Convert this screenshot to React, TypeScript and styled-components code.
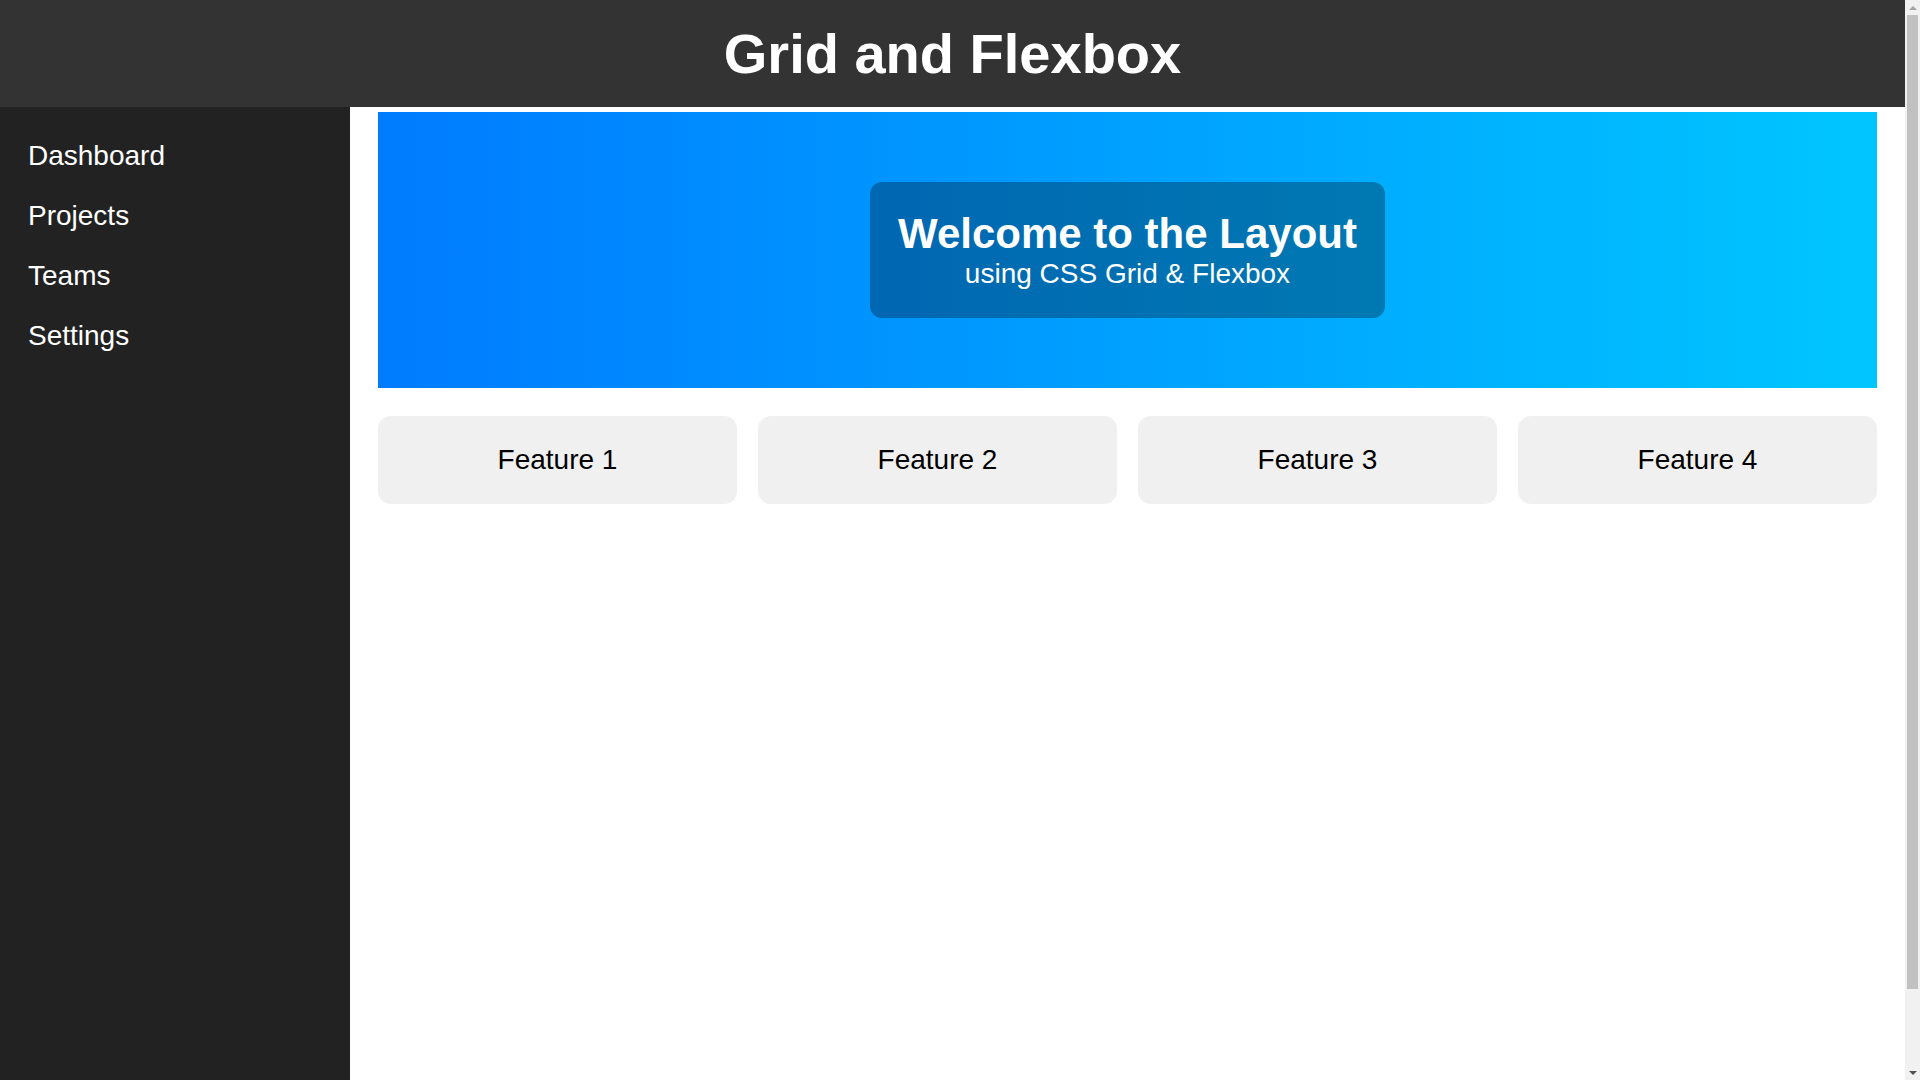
import { FC } from 'react';
import { styled, createGlobalStyle } from 'styled-components';

const GlobalStyle = createGlobalStyle`
  * {
    box-sizing: border-box;
  }
  body {
    margin: 0;
    padding-right: 15px;
    font-family: 'Liberation Sans', Arial, sans-serif;
    background: #fff;
  }
`;

const navItems = ['Dashboard', 'Projects', 'Teams', 'Settings'];
const features = ['Feature 1', 'Feature 2', 'Feature 3', 'Feature 4'];

const App: FC = () => {
  return (
    <>
      <GlobalStyle />
      <Layout>
        <Header>
          <Title>Grid and Flexbox</Title>
        </Header>
        <Sidebar>
          <NavList>
            {navItems.map((item) => (
              <NavItem key={item}>{item}</NavItem>
            ))}
          </NavList>
        </Sidebar>
        <Main>
          <Hero>
            <Banner>
              <BannerTitle>Welcome to the Layout</BannerTitle>
              <BannerText>using CSS Grid &amp; Flexbox</BannerText>
            </Banner>
          </Hero>
          <FeatureGrid>
            {features.map((f) => (
              <FeatureCard key={f}>{f}</FeatureCard>
            ))}
          </FeatureGrid>
        </Main>
      </Layout>
      {/* stand-in for the browser's classic scrollbar */}
      <ScrollRail aria-hidden>
        <ScrollArrow $dir="up" />
        <ScrollThumb />
        <ScrollArrow $dir="down" />
      </ScrollRail>
    </>
  );
};

export default App;

const Layout = styled.div`
  display: grid;
  grid-template-columns: 350px 1fr;
  grid-template-rows: 107px 1fr;
  grid-template-areas:
    'header header'
    'sidebar main';
  min-height: calc(100vh + 84px);
`;

const Header = styled.header`
  grid-area: header;
  background: #333;
  color: #fff;
  display: flex;
  align-items: center;
  justify-content: center;
`;

const Title = styled.h1`
  margin: 0;
  font-size: 56px;
  font-weight: 700;
`;

const Sidebar = styled.aside`
  grid-area: sidebar;
  background: #222;
  color: #fff;
  padding: 19px 28px;
`;

const NavList = styled.ul`
  list-style: none;
  margin: 0;
  padding: 0;
`;

const NavItem = styled.li`
  font-size: 28px;
  line-height: 32px;
  padding: 14px 0;
`;

const Main = styled.main`
  grid-area: main;
  padding: 5px 28px 28px;
  display: flex;
  flex-direction: column;
  gap: 28px;
`;

const Hero = styled.section`
  height: 276px;
  background: linear-gradient(to right, #007bff, #00c6ff);
  display: flex;
  align-items: center;
  justify-content: center;
`;

const Banner = styled.div`
  background: rgba(0, 0, 0, 0.3);
  color: #fff;
  border-radius: 12px;
  padding: 28px;
  text-align: center;
`;

const BannerTitle = styled.h2`
  margin: 0;
  font-size: 42px;
  line-height: 48px;
  font-weight: 700;
`;

const BannerText = styled.p`
  margin: 0;
  font-size: 28px;
  line-height: 32px;
`;

const FeatureGrid = styled.div`
  display: grid;
  grid-template-columns: repeat(4, 1fr);
  gap: 21px;
`;

const FeatureCard = styled.div`
  background: #f0f0f0;
  color: #000;
  border-radius: 13px;
  padding: 28px 16px;
  font-size: 28px;
  line-height: 32px;
  text-align: center;
`;

const ScrollRail = styled.div`
  position: fixed;
  top: 0;
  right: 0;
  width: 15px;
  height: 100vh;
  background: #f1f1f1;
  display: flex;
  flex-direction: column;
  align-items: center;
`;

const ScrollThumb = styled.div`
  width: 11px;
  flex: 0 0 974px;
  background: #c1c1c1;
`;

const ScrollArrow = styled.div<{ $dir: 'up' | 'down' }>`
  flex: 0 0 15px;
  width: 15px;
  display: flex;
  align-items: center;
  justify-content: center;
  margin-top: ${({ $dir }) => ($dir === 'down' ? 'auto' : '0')};

  &::after {
    content: '';
    border-left: 4px solid transparent;
    border-right: 4px solid transparent;
    ${({ $dir }) =>
      $dir === 'up'
        ? 'border-bottom: 4px solid #a3a3a3;'
        : 'border-top: 4px solid #505050;'}
  }
`;
